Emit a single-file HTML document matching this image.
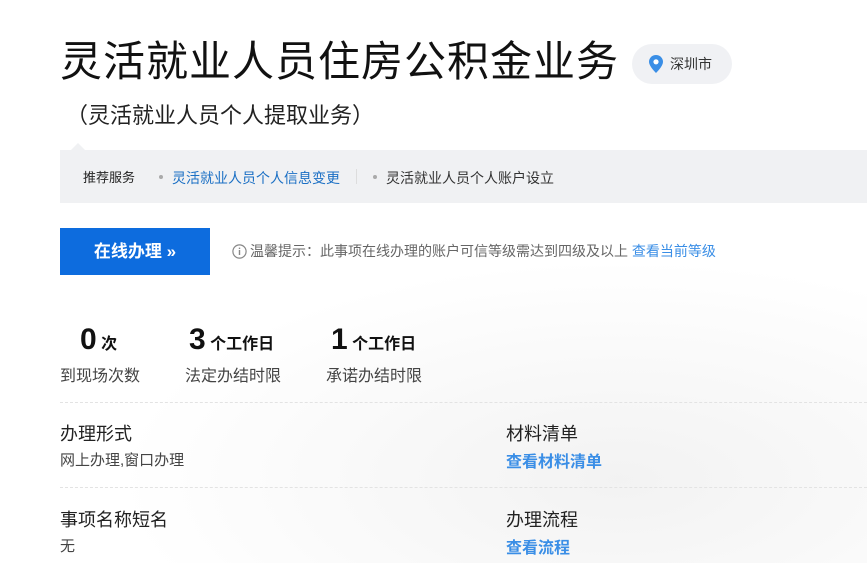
<!DOCTYPE html>
<html style="width:867px;height:563px;overflow:hidden"><head><meta charset="utf-8"><style>
*{margin:0;padding:0;box-sizing:border-box}
body{width:867px;height:563px;overflow:hidden;background:#fff;font-family:"Liberation Sans","Noto Sans CJK SC",sans-serif;color:#222;position:relative}
.a{position:absolute;white-space:nowrap}
.title{left:60px;top:36px;font-size:42px;letter-spacing:1px;color:#111;line-height:52px}
.pill{left:632px;top:44px;width:100px;height:40px;border-radius:20px;background:#f0f1f4;font-size:14px;color:#333;line-height:40px;padding-left:38px}
.sub{left:66px;top:101px;font-size:22px;color:#222;line-height:30px}
.bar{left:60px;top:150px;width:807px;height:53px;background:#f0f1f3}
.notch{left:71px;top:143px;width:0;height:0;border-left:7px solid transparent;border-right:7px solid transparent;border-bottom:7px solid #f0f1f3}
.bar span{position:absolute;top:0;line-height:56px;font-size:14px}
.dot{width:4px;height:4px;border-radius:2px;background:#aaa;position:absolute;top:25px}
.btn{left:60px;top:228px;width:150px;height:47px;background:#0d6cde;color:#fff;font-size:17px;font-weight:bold;line-height:47px;text-align:center}
.tip{left:232px;top:242px;font-size:14px;color:#666;line-height:18px}
.num{font-size:30px;font-weight:bold;color:#111}
.unit{font-size:16px;font-weight:bold;color:#111}
.lbl{font-size:16px;color:#444}
.line{left:60px;width:807px;border-top:1px dashed #e3e3e3}
.h{font-size:18px;color:#222}
.v{font-size:15px;color:#444}
.lk{font-size:16px;color:#3a8ee6;font-weight:bold}
.bg{left:0;top:250px;width:867px;height:313px;background:radial-gradient(ellipse 500px 220px at 620px 230px,rgba(232,232,232,0.55),rgba(255,255,255,0))}
</style></head><body>
<div class="a bg"></div>
<div class="a title">灵活就业人员住房公积金业务</div>
<div class="a pill"><svg style="position:absolute;left:17px;top:11px" width="14" height="18" viewBox="0 0 14 18"><path d="M7 0C3.1 0 0 3 0 6.8 0 11.5 7 18 7 18s7-6.5 7-11.2C14 3 10.9 0 7 0z" fill="#3a8ee6"/><circle cx="7" cy="6.8" r="2.6" fill="#fff"/></svg>深圳市</div>
<div class="a sub">（灵活就业人员个人提取业务）</div>
<div class="a notch"></div>
<div class="a bar">
<span style="left:23px;color:#222;font-size:13px">推荐服务</span>
<i class="dot" style="left:99px"></i>
<span style="left:112px;color:#1a6fc4">灵活就业人员个人信息变更</span>
<i style="position:absolute;left:296px;top:19px;width:1px;height:15px;background:#ddd"></i>
<i class="dot" style="left:313px"></i>
<span style="left:326px;color:#333">灵活就业人员个人账户设立</span>
</div>
<div class="a btn">在线办理 »</div>
<div class="a tip"><svg style="vertical-align:-3px;margin-right:3px" width="15" height="15" viewBox="0 0 15 15"><circle cx="7.5" cy="7.5" r="6.6" fill="none" stroke="#888" stroke-width="1.2"/><rect x="6.8" y="6" width="1.4" height="5" fill="#888"/><rect x="6.8" y="3.6" width="1.4" height="1.4" fill="#888"/></svg>温馨提示：此事项在线办理的账户可信等级需达到四级及以上 <span style="color:#3a8ee6">查看当前等级</span></div>

<div class="a" style="left:80px;top:320px;line-height:40px"><span class="num">0</span> <span class="unit">次</span></div>
<div class="a lbl" style="left:60px;top:362px">到现场次数</div>
<div class="a" style="left:189px;top:320px;line-height:40px"><span class="num">3</span> <span class="unit">个工作日</span></div>
<div class="a lbl" style="left:185px;top:362px">法定办结时限</div>
<div class="a" style="left:331px;top:320px;line-height:40px"><span class="num">1</span> <span class="unit">个工作日</span></div>
<div class="a lbl" style="left:326px;top:362px">承诺办结时限</div>

<div class="a line" style="top:402px"></div>
<div class="a h" style="left:60px;top:420px">办理形式</div>
<div class="a v" style="left:60px;top:449px">网上办理,窗口办理</div>
<div class="a h" style="left:506px;top:420px">材料清单</div>
<div class="a lk" style="left:506px;top:448px">查看材料清单</div>
<div class="a line" style="top:487px"></div>
<div class="a h" style="left:60px;top:506px">事项名称短名</div>
<div class="a v" style="left:60px;top:535px">无</div>
<div class="a h" style="left:506px;top:506px">办理流程</div>
<div class="a lk" style="left:506px;top:534px">查看流程</div>
</body></html>
